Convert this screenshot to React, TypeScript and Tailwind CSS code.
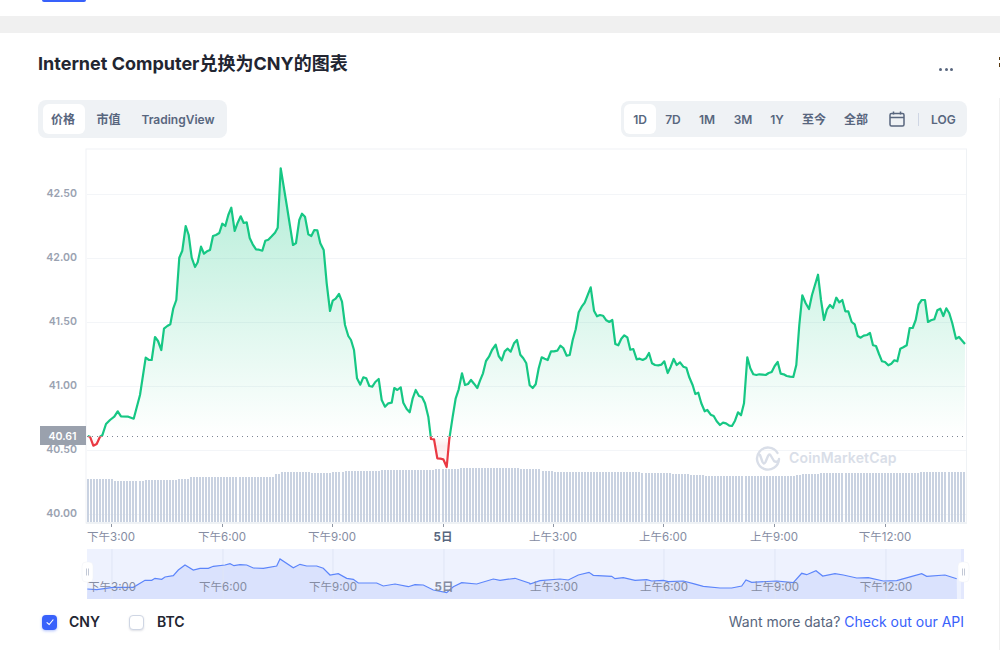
import { Fragment } from "react";

// traced from the picture, [x, y] pairs at 3x with their crop origin
const seg1 = [8,858,15,860,25,887,35,882,45,860,52,856,63,822,75,810,88,800,98,784,108,799,130,800,146,806,165,735,182,623,192,630,200,630,210,561,219,573,229,600,237,536,247,528,256,523,265,475,274,450,283,323,292,302,302,228,311,255,320,323,330,351,338,337,348,290,357,311,366,304,375,300,384,258,393,255,403,249,412,221,421,228,430,195,439,173,449,243,458,218,467,199,476,219,485,217,494,264,503,283,513,298,522,299,532,302,541,272,550,269,560,259,570,248,578,233,587,55,605,165,624,285,633,279,643,210,651,191,660,200,670,253,679,258,688,240,697,241,706,280,716,300,725,400,735,483,743,452,752,446,762,432,771,455,780,525,790,558,798,570,807,600,816,685,826,704,835,682,844,685,853,708,862,710,871,696,881,687,890,750];
const seg2 = [15,440,25,430,35,428,43,384,52,390,62,382,70,428,80,447,89,457,98,415,107,390,117,408,126,411,135,430,145,470,153,537,162,538,172,595,181,596,190,598,200,621,208,537,218,470,227,415,236,388,246,340,255,375,264,372,273,360,282,371,292,384,300,362,309,340,318,303,327,290,336,270,347,254,356,288,365,301,374,274,383,266,392,275,402,250,411,240,421,284,430,295,439,310,449,376,458,384,467,373,476,325,485,292,494,296,503,300,513,274,522,274,532,272,541,257,550,264,560,287,569,285,578,240,587,208,596,157,605,140,614,128,632,82,642,152,651,169,660,165,669,167,679,181,688,186,697,180,706,252,715,256,724,236,733,226,742,232,751,269,760,267,770,298,779,296,788,300,798,295,807,279,816,310,825,315,835,316,844,314,853,304,863,339,872,320];
const seg3 = [11,297,20,315,30,307,40,320,49,323,58,352,68,376,76,402,85,398,94,430,104,454,112,450,122,464,131,468,140,484,150,495,159,488,168,490,178,497,186,498,195,482,204,457,213,466,222,430,232,292,241,325,250,343,259,345,268,343,278,344,287,345,296,339,305,336,314,318,323,306,332,341,341,343,350,348,360,350,370,351,379,315,388,195,397,106,407,130,417,147,426,105,444,44,453,120,462,180,471,148,480,135,489,144,499,113,508,127,517,120,526,154,535,154,545,186,554,193,563,228,572,233,581,227,591,225,600,219,609,256,618,258,627,282,636,304,645,306,655,316,664,311,673,301,682,304,691,266,700,262,710,256,719,204,728,204,737,180,746,133,755,120,765,120,774,186,783,181,793,178,802,151,811,146,820,168,829,145,838,160,847,190,858,236,867,231,885,252];
const nav1 = [22,132,50,134,100,127,160,127,195,106,215,106,225,100,245,103,255,96,280,92,295,75,315,60,340,75,360,70,385,70,400,64,435,60,450,56,462,62,480,59,500,60,520,69,550,70,590,63,600,42,640,68,660,58,680,63,710,63,730,70,750,90,775,86,800,100,820,103,835,114,890,114,910,123,945,117,985,125,1005,119,1030,120,1060,135,1100,143,1120,125,1145,113,1190,117,1240,102,1260,106,1305,100,1349,115];
const nav2 = [30,117,60,107,120,102,145,105,175,90,207,82,220,91,275,94,285,101,310,98,345,106,380,104,395,108,430,106,445,110,490,108,520,116,550,124,600,129,635,129,665,123,678,105,695,112,770,108,820,113,845,85,860,89,888,77,908,93,945,86,970,90,1010,99,1045,98,1090,108,1130,107,1165,97,1205,86,1220,94,1275,90,1310,101];

function trace(flat: number[], ox: number, oy: number) {
  const out: string[] = [];
  for (let i = 0; i < flat.length; i += 2) {
    out.push(`${(ox + flat[i] / 3).toFixed(1)},${(oy + flat[i + 1] / 3).toFixed(1)}`);
  }
  return out;
}

const pricePts = [...trace(seg1, 85, 150), ...trace(seg2, 380, 260), ...trace(seg3, 670, 260)];
const pricePath = "M" + pricePts.join(" L");
const navPts = [...trace(nav1, 80, 545), ...trace(nav2, 520, 545)];
const navPath = "M" + navPts.join(" L");

// [start x, top of bar]
const volSteps = [
  [87, 479], [113, 481], [145, 480], [178, 479], [190, 477], [275, 474], [281, 472], [310, 473], [330, 472], [345, 471],
  [380, 470], [433, 469], [458, 468], [520, 469], [540, 471], [552, 472], [640, 473], [670, 474], [690, 475], [705, 476],
  [795, 475], [802, 474], [820, 473], [918, 472],
];

function volTop(x: number) {
  let top = 479;
  for (const [sx, t] of volSteps) if (x >= sx) top = t;
  return top;
}

const bars = Array.from({ length: 290 }, (_, i) => Math.round(87 + i * 3.03));
const gridY = [194, 258, 322, 386, 450, 514];
const yLabels = [
  { y: 193, t: "42.50" },
  { y: 257, t: "42.00" },
  { y: 321, t: "41.50" },
  { y: 385, t: "41.00" },
  { y: 449, t: "40.50" },
  { y: 513, t: "40.00" },
];
const xLabels = [
  { x: 111, t: "下午3:00" },
  { x: 222, t: "下午6:00" },
  { x: 332, t: "下午9:00" },
  { x: 443, t: "5日", bold: true },
  { x: 553, t: "上午3:00" },
  { x: 663, t: "上午6:00" },
  { x: 774, t: "上午9:00" },
  { x: 885, t: "下午12:00" },
];
const ranges = [
  { t: "1D", w: "w-8", active: true },
  { t: "7D", w: "w-[34px]" },
  { t: "1M", w: "w-[34px]" },
  { t: "3M", w: "w-[38px]" },
  { t: "1Y", w: "w-[30px]" },
  { t: "至今", w: "w-[44px]" },
  { t: "全部", w: "w-[40px]" },
];

function PriceChart() {
  return (
    <svg viewBox="38 148 932 452" className="block w-[932px] h-[452px]">
      <defs>
        <linearGradient id="upFill" gradientUnits="userSpaceOnUse" x1="0" y1="170" x2="0" y2="436">
          <stop offset="0" stopColor="#16c784" stopOpacity="0.33" />
          <stop offset="1" stopColor="#16c784" stopOpacity="0" />
        </linearGradient>
        <linearGradient id="downFill" gradientUnits="userSpaceOnUse" x1="0" y1="437" x2="0" y2="467">
          <stop offset="0" stopColor="#ea3943" stopOpacity="0" />
          <stop offset="0.3" stopColor="#ea3943" stopOpacity="0.1" />
          <stop offset="1" stopColor="#ea3943" stopOpacity="0" />
        </linearGradient>
        <clipPath id="above"><rect x="80" y="150" width="890" height="286.5" /></clipPath>
        <clipPath id="below"><rect x="80" y="436.5" width="890" height="60" /></clipPath>
      </defs>

      <rect x="86" y="149" width="880.5" height="374" fill="none" stroke="#eff2f5" />
      {gridY.map((y) => (
        <line key={y} x1="87" x2="966" y1={y + 0.5} y2={y + 0.5} stroke="#f3f5f8" />
      ))}

      {bars.map((x) => (
        <rect key={x} x={x} y={volTop(x)} width="2" height={522 - volTop(x)} fill="#c9d2e1" />
      ))}
      <line x1="86" x2="967" y1="523" y2="523" stroke="#eff2f5" strokeWidth="2" />

      <path d={`${pricePath} L964.7,436.5 L87.7,436.5 Z`} fill="url(#upFill)" clipPath="url(#above)" />
      <path d={`${pricePath} L964.7,436.5 L87.7,436.5 Z`} fill="url(#downFill)" clipPath="url(#below)" />
      <path d={pricePath} fill="none" stroke="#16c784" strokeWidth="2.2" strokeLinejoin="round" clipPath="url(#above)" />
      <path d={pricePath} fill="none" stroke="#ea3943" strokeWidth="2.2" strokeLinejoin="round" clipPath="url(#below)" />
      <line x1="87" x2="966" y1="436.5" y2="436.5" stroke="#7d8594" strokeDasharray="1 4" />

      {/* watermark */}
      <g fill="none" stroke="#d9dee8" strokeWidth="2.4" strokeLinecap="round" strokeLinejoin="round">
        <path d="M777.5,453 A11,11 0 1 0 779,459 A3,3 0 0 1 774,461 L771,456 Q769.5,453 768,456 L765.5,462 Q764,465 762.5,462 L760,455" />
      </g>
      <text x="789" y="463" fontSize="14" fontWeight="600" letterSpacing="0.15" fill="#d9dee8">CoinMarketCap</text>

      {yLabels.map((l) => (
        <text key={l.t} x="77" y={l.y + 3.5} textAnchor="end" fontSize="10.6" fontWeight="600" fill="#9aa2b1">{l.t}</text>
      ))}
      <rect x="40" y="426" width="46" height="19" fill="#9aa1ad" />
      <text x="62.5" y="439.5" textAnchor="middle" fontSize="10.6" fontWeight="600" fill="#fff">40.61</text>

      {xLabels.map((l) => (
        <Fragment key={l.t}>
          <line x1={l.x + 0.5} x2={l.x + 0.5} y1="524" y2="527" stroke="#8e96a4" />
          <text x={l.x} y="541" textAnchor="middle" fontSize="11.5" fontWeight={l.bold ? 700 : 400} fill={l.bold ? "#58667e" : "#858ca2"}>{l.t}</text>
        </Fragment>
      ))}

      {/* range navigator */}
      <rect x="87" y="549" width="877" height="50" fill="#eef2fe" />
      <path d={`${navPath} L957,599 L87,599 Z`} fill="#dae2fd" />
      {xLabels.map((l) => (
        <line key={l.t} x1={l.x + 1} x2={l.x + 1} y1="549" y2="599" stroke="#dfe5f5" />
      ))}
      <rect x="961" y="549" width="3" height="50" fill="#2d5bf5" fillOpacity="0.06" />
      <path d={navPath} fill="none" stroke="#5c85fb" strokeWidth="1.2" />
      {xLabels.map((l) => (
        <text key={l.t} x={l.x + 1} y="591" textAnchor="middle" fontSize="11.5" fontWeight={l.bold ? 700 : 400} fill="#858ca2">{l.t}</text>
      ))}
      {[82, 958].map((x) => (
        <g key={x}>
          <rect x={x} y="562" width="11" height="20" rx="4" fill="#fff" stroke="#eef0f5" strokeWidth="0.5" />
          <line x1={x + 4.5} x2={x + 4.5} y1="568.5" y2="575.5" stroke="#c3c9d6" />
          <line x1={x + 6.5} x2={x + 6.5} y1="568.5" y2="575.5" stroke="#c3c9d6" />
        </g>
      ))}
    </svg>
  );
}

export default function App() {
  return (
    <div className="relative w-[1000px] h-[650px] overflow-hidden bg-white font-[Inter,'Noto_Sans_CJK_SC',sans-serif]">
      <div className="h-4 pl-[42px]">
        <div className="w-[44px] h-[1.5px] rounded-b bg-[#3861fb]" />
      </div>
      <div className="h-[17px] bg-[#f0f0f0]" />

      <div className="pl-[38px] pr-[33px]">
        <div className="flex justify-between items-start pt-[18px] h-[67px]">
          <h2 className="text-[18px] leading-[26px] font-bold text-[#222531]">Internet Computer兑换为CNY的图表</h2>
          <div className="flex gap-[2.5px] mt-[17px] mr-[14px]">
            <span className="w-[3px] h-[3px] rounded-full bg-[#58667e]" />
            <span className="w-[3px] h-[3px] rounded-full bg-[#58667e]" />
            <span className="w-[3px] h-[3px] rounded-full bg-[#58667e]" />
          </div>
        </div>

        <div className="flex justify-between items-center h-[38px] text-xs font-semibold text-[#58667e]">
          <div className="flex items-center h-[38px] w-[189px] pl-[5px] rounded-lg bg-[#eff2f5]">
            <span className="flex items-center justify-center w-[42px] h-[30px] pt-px pr-[2px] rounded-md bg-white font-bold">价格</span>
            <span className="flex items-center justify-center w-[47px] h-[30px] pt-px">市值</span>
            <span className="flex items-center justify-center w-[92px] h-[30px] pt-px">TradingView</span>
          </div>
          <div className="flex items-center h-9 w-[346px] px-[3px] rounded-lg bg-[#eff2f5]">
            {ranges.map((r) => (
              <span
                key={r.t}
                className={`flex items-center justify-center h-[30px] pt-px ${r.w} ${r.active ? "rounded-md bg-white" : ""}`}
              >
                {r.t}
              </span>
            ))}
            <svg viewBox="0 0 16 16" className="w-4 h-4 ml-[13px]" fill="none" stroke="#58667e" strokeWidth="1.5">
              <rect x="1" y="2.5" width="14" height="12.5" rx="1.5" />
              <path d="M1 6.5h14M4.5 0.5v3M11.5 0.5v3" />
            </svg>
            <span className="w-px h-[13px] ml-[13px] bg-[#cfd6e4]" />
            <span className="ml-[12px] pt-px">LOG</span>
          </div>
        </div>

        <div className="mt-[10px]">
          <PriceChart />
        </div>

        <div className="flex justify-between items-center mt-[12px] pl-1 pr-[3px] text-sm">
          <div className="flex items-center font-semibold text-[#222531]">
            <span className="flex items-center justify-center w-[15px] h-[15px] rounded-[4px] bg-[#3861fb] shadow-[0_1px_3px_rgba(56,97,251,0.4)]">
              <svg viewBox="0 0 12 12" className="w-[10px] h-[10px]" fill="none" stroke="#fff" strokeWidth="1.4">
                <path d="M2 6.5 L5 9 L10 3" />
              </svg>
            </span>
            <span className="ml-[12px] w-[48px]">CNY</span>
            <span className="w-[15px] h-[15px] ml-[12px] rounded-[4px] bg-white border border-[#cfd6e4] shadow-[0_1px_2px_rgba(88,102,126,0.2)]" />
            <span className="ml-[13px]">BTC</span>
          </div>
          <p className="text-[#58667e]">
            Want more data? <a className="text-[#3861fb]">Check out our API</a>
          </p>
        </div>
      </div>

      {/* edge of the next column, cut off by the window */}
      <span className="absolute right-0 top-[57px] w-px h-[3px] bg-[#5a3a10]" />
      <span className="absolute right-0 top-[63px] w-px h-1 bg-[#5a3a10]" />
      <span className="absolute right-0 top-[98px] bottom-0 w-px bg-[#f0f0f0]" />
    </div>
  );
}
